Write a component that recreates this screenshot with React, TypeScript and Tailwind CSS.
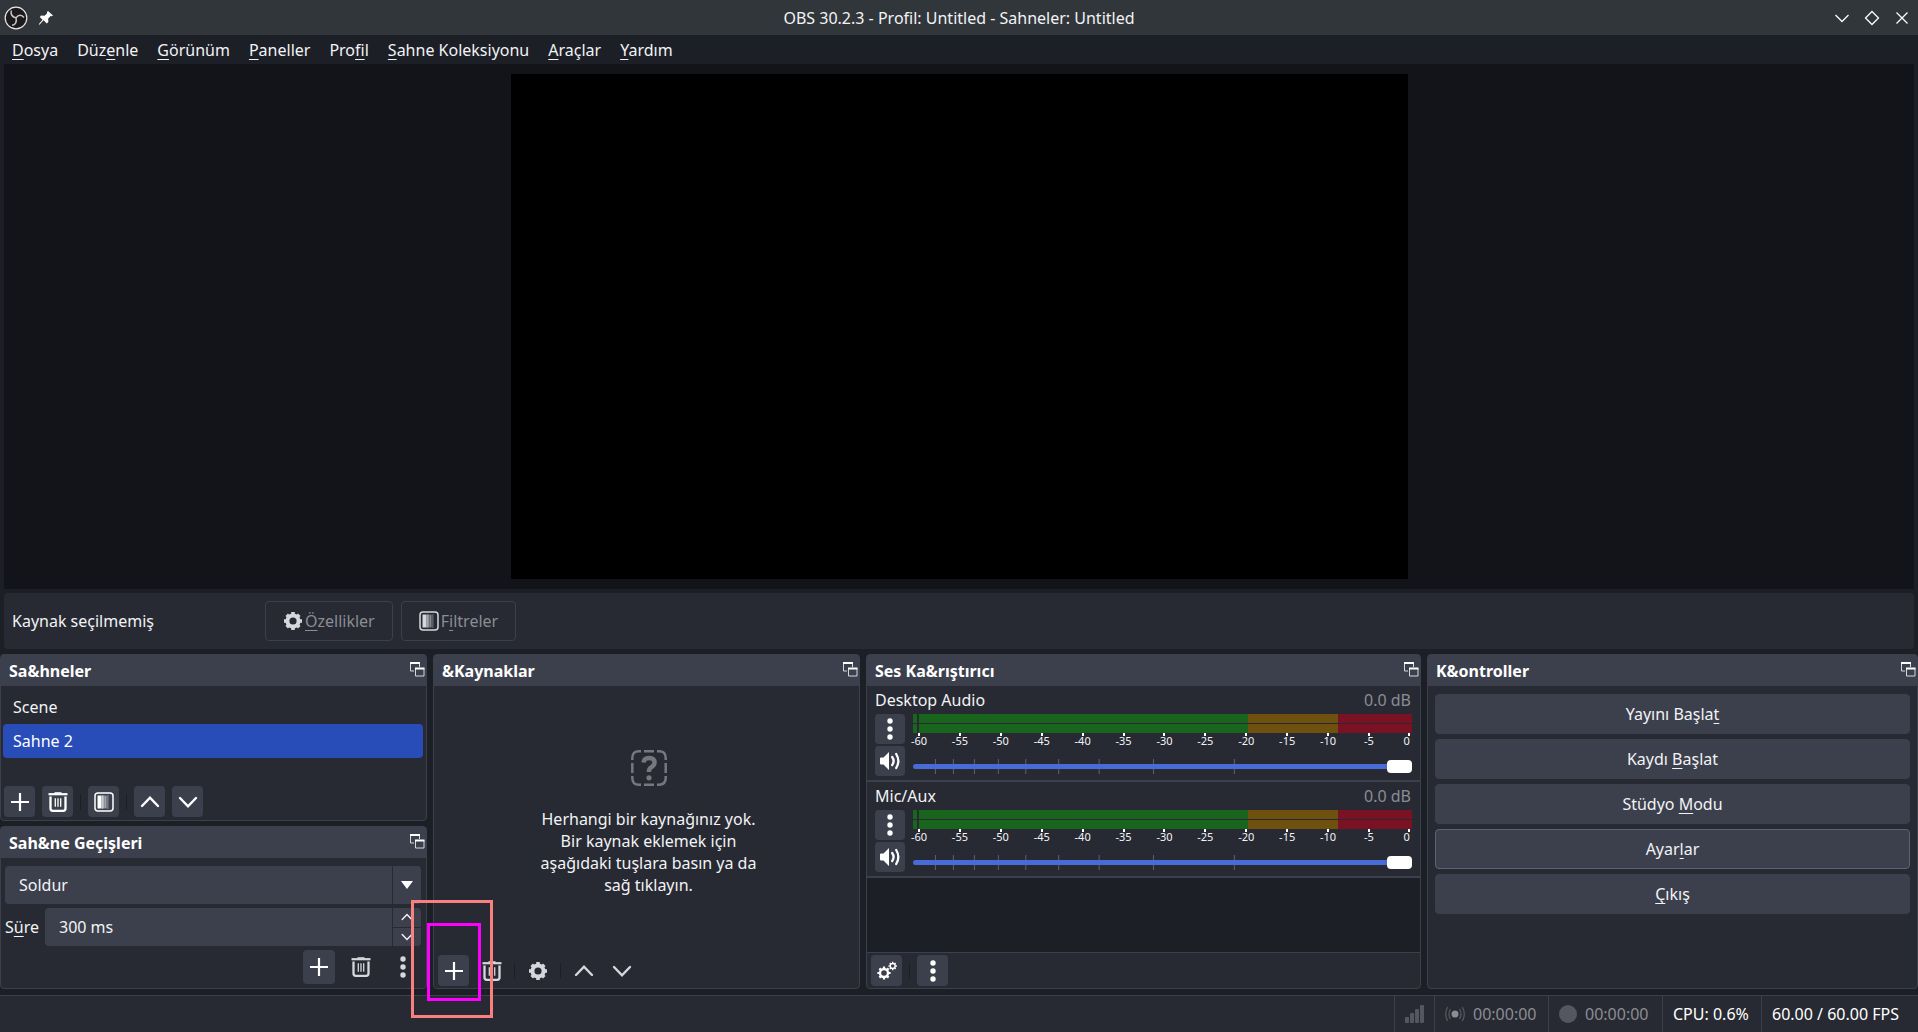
import React, { useState } from 'react';
import clsx from 'clsx';

const MENUS = ['_Dosya', 'Düz_enle', '_Görünüm', '_Paneller', 'Pro_fil', '_Sahne Koleksiyonu', '_Araçlar', '_Yardım'];
const SCENES = ['Scene', 'Sahne 2'];
const CONTROLS = ['Yayını Başla_t', 'Kaydı _Başlat', 'Stüdyo _Modu', 'Ayar_lar', '_Çıkış'];
const CHANNELS = ['Desktop Audio', 'Mic/Aux'];
const DB_MARKS = [-60, -55, -50, -45, -40, -35, -30, -25, -20, -15, -10, -5, 0];
const FADER_MARKS = ['4.5%', '8.1%', '12.3%', '17.1%', '22.6%', '29.2%', '37.3%', '48.2%', '64.4%'];

interface IconProps {
  className?: string;
}

// "_" in front of a letter marks the keyboard accelerator
function Accel({ text }: { text: string }) {
  const at = text.indexOf('_');
  if (at < 0) return <>{text}</>;
  return (
    <span>
      {text.slice(0, at)}
      <span className="underline decoration-1 underline-offset-3 [text-decoration-skip-ink:none]">{text[at + 1]}</span>
      {text.slice(at + 2)}
    </span>
  );
}

function PlusIcon({ className = 'size-5' }: IconProps) {
  return (
    <svg viewBox="0 0 20 20" className={className} fill="none" stroke="currentColor" strokeWidth="2.2">
      <path d="M10 1v18M1 10h18" />
    </svg>
  );
}

function TrashIcon({ className = 'size-5' }: IconProps) {
  return (
    <svg viewBox="0 0 20 20" className={className} fill="none" stroke="currentColor">
      <path d="M.5 2.2h19" strokeWidth="2.2" />
      <path d="M6.5 1h7" strokeWidth="1.6" />
      <path d="M2.5 4.5v12q0 2.3 2.3 2.3h10.4q2.3 0 2.3-2.3v-12" strokeWidth="2.3" />
      <path d="M7.3 6.3v8.4M10 6.3v8.4M12.7 6.3v8.4" strokeWidth="1.3" />
    </svg>
  );
}

function ChevronUpIcon({ className = 'size-5' }: IconProps) {
  return (
    <svg viewBox="0 0 20 20" className={className} fill="none" stroke="currentColor" strokeWidth="2.4" strokeLinecap="round">
      <path d="M2 14l8-8.3 8 8.3" />
    </svg>
  );
}

function ChevronDownIcon({ className = 'size-5' }: IconProps) {
  return (
    <svg viewBox="0 0 20 20" className={className} fill="none" stroke="currentColor" strokeWidth="2.4" strokeLinecap="round">
      <path d="M2 6l8 8.3L18 6" />
    </svg>
  );
}

function GearIcon({ className = 'size-5' }: IconProps) {
  return (
    <svg viewBox="0 0 20 20" className={className} fill="none" stroke="currentColor">
      <circle cx="10" cy="10" r="5.6" strokeWidth="4" />
      <path
        d="M10 1v3M10 16v3M1 10h3M16 10h3M3.7 3.7l2 2M14.3 14.3l2 2M3.7 16.3l2-2M14.3 5.7l2-2"
        strokeWidth="3.6"
        strokeLinejoin="round"
      />
    </svg>
  );
}

function GearsIcon() {
  return (
    <svg viewBox="0 0 20 20" className="size-5" fill="none" stroke="currentColor">
      <circle cx="7" cy="12" r="4" strokeWidth="2.4" />
      <path
        d="M7 5.4v2M7 16.6v2M.4 12h2M11.6 12h2M2.4 7.4l1.4 1.4M10.2 15.2l1.4 1.4M2.4 16.6l1.4-1.4M10.2 8.8l1.4-1.4"
        strokeWidth="2.2"
      />
      <circle cx="15.7" cy="5" r="2.5" strokeWidth="1.4" />
      <path
        d="M15.7.8v1.4M15.7 7.8v1.4M11.5 5h1.4M18.5 5h1.4M12.8 2.1l.9.9M17.7 7l.9.9M12.8 7.9l.9-.9M17.7 3l.9-.9"
        strokeWidth="1.4"
      />
    </svg>
  );
}

function FilterIcon({ className = 'size-5' }: IconProps) {
  return (
    <svg viewBox="0 0 20 20" className={className}>
      <rect x="1" y="1" width="18" height="18" rx="3" fill="none" stroke="currentColor" strokeWidth="1.5" />
      <path d="M3.5 3.5h4v13h-4z" fill="currentColor" />
      <path d="M7.5 3.5h3v13h-3z" fill="currentColor" opacity=".6" />
      <path d="M10.5 3.5h3v13h-3z" fill="currentColor" opacity=".3" />
      <path d="M8.5 3.5v13M11.5 4.5v12M14 3.5v13" stroke="currentColor" strokeWidth="1" strokeDasharray="1 1" opacity=".7" />
    </svg>
  );
}

function DotsIcon() {
  return (
    <svg viewBox="0 0 8 22" className="h-[22px] w-2" fill="currentColor">
      <circle cx="4" cy="3" r="2.7" />
      <circle cx="4" cy="11" r="2.7" />
      <circle cx="4" cy="19" r="2.7" />
    </svg>
  );
}

function SpeakerIcon() {
  return (
    <svg viewBox="0 0 20 20" className="size-5" fill="none" stroke="currentColor" strokeWidth="2.3" strokeLinecap="round">
      <path d="M0 7.5Q0 6.5 1 6.5H3.5L9 1v18L3.5 13.5H1Q0 13.5 0 12.5z" fill="currentColor" stroke="none" />
      <path d="M12.200 6q2.800 4 0 8M16.200 3q4.300 7 0 14" />
    </svg>
  );
}

function PopoutIcon() {
  return (
    <svg viewBox="0 0 16 16" className="size-4" fill="none" stroke="#d5d7dd">
      <path d="M5 10H1.5V2.5H10.5V6" />
      <path d="M1 2h10" stroke="#fff" strokeWidth="2" />
      <path d="M6.5 7.5h8.5v7.5h-8.5z" />
      <path d="M6 7.5h9.500" stroke="#fff" strokeWidth="2" />
    </svg>
  );
}

function ObsLogo() {
  return (
    <svg viewBox="0 0 24 24" className="size-6" fill="none" stroke="#c4c4c4">
      <circle cx="12" cy="12" r="10.8" fill="#1d1a1e" stroke="#e6e6e6" strokeWidth="1.2" />
      <path d="M7.200 4.500c-.6 4 1 6.500 4.800 7.300" strokeWidth="1.500" />
      <path d="M20 11.500c-2.200-3.200-5.600-3.200-8 .3" strokeWidth="1.500" />
      <path d="M8 19.300c3.600-.4 5-3.600 4-7.500" strokeWidth="1.500" />
    </svg>
  );
}

function PinIcon() {
  return (
    <svg viewBox="0 0 16 16" className="size-4" fill="#fcfcfc">
      <path d="M10 1l5 4.600-1.200.6-1.200-.2-2.500 2.800.3 3.200-1.600 1.500-3.300-3.300L1.500 14.800l-.8-.6 3.800-4.500L1.800 7 3 5.600l3.400.2L9 3.400 9 2z" />
    </svg>
  );
}

function ToolButton({ label, children, flat }: { label: string; children: React.ReactNode; flat?: boolean }) {
  return (
    <button
      type="button"
      title={label}
      aria-label={label}
      className={clsx(
        'flex h-[31px] w-[31px] shrink-0 items-center justify-center rounded',
        flat ? 'text-[#d5d7dd]' : 'bg-[#3c404d] text-white'
      )}
    >
      {children}
    </button>
  );
}

function Separator() {
  return <span className="h-4 w-px bg-[#1d1f26]" />;
}

function Panel({ title, className, children }: { title: string; className?: string; children: React.ReactNode }) {
  return (
    <section className={clsx('flex min-w-0 flex-col rounded border border-[#3c404d] bg-[#272a33]', className)}>
      <header className="flex h-[31px] shrink-0 items-start justify-between bg-[#3c404d] pr-px pl-2">
        <h2 className="leading-8 font-bold text-white">{title}</h2>
        <button type="button" aria-label={`${title} ayır`} className="mt-1.5">
          <PopoutIcon />
        </button>
      </header>
      {children}
    </section>
  );
}

function ScenesPanel() {
  const [selected, setSelected] = useState('Sahne 2');
  return (
    <Panel title="Sa&hneler" className="flex-1">
      <ul className="flex-1 py-1 pr-[3px] pl-0.5">
        {SCENES.map((scene) => (
          <li key={scene}>
            <button
              type="button"
              onClick={() => setSelected(scene)}
              className={clsx('h-[34px] w-full rounded px-2.5 text-left', selected === scene && 'bg-[#284cb8] text-white')}
            >
              {scene}
            </button>
          </li>
        ))}
      </ul>
      <div className="flex items-center gap-[7px] px-[3px] pb-[3px]">
        <ToolButton label="Sahne ekle"><PlusIcon /></ToolButton>
        <ToolButton label="Sahneyi sil"><TrashIcon /></ToolButton>
        <Separator />
        <ToolButton label="Sahne filtreleri"><FilterIcon /></ToolButton>
        <Separator />
        <ToolButton label="Yukarı taşı"><ChevronUpIcon /></ToolButton>
        <ToolButton label="Aşağı taşı"><ChevronDownIcon /></ToolButton>
      </div>
    </Panel>
  );
}

function TransitionsPanel() {
  return (
    <Panel title="Sah&ne Geçişleri">
      <div className="flex flex-col gap-1 pt-2 pr-[5px] pb-1 pl-1">
        <div className="relative">
          <select aria-label="Geçiş" className="h-[38px] w-full appearance-none rounded bg-[#3c404d] px-3.5">
            <option>Soldur</option>
          </select>
          <span className="pointer-events-none absolute inset-y-0 right-0 flex w-[29px] items-center justify-center border-l border-[#272a33]">
            <svg viewBox="0 0 12 8" className="h-2 w-3" fill="#fff"><path d="M0 0h12L6 8z" /></svg>
          </span>
        </div>
        <div className="flex items-center">
          <label htmlFor="duration" className="w-10 shrink-0"><Accel text="S_üre" /></label>
          <div className="flex h-[38px] min-w-0 flex-1 rounded bg-[#3c404d]">
            <input id="duration" type="text" defaultValue="300 ms" className="min-w-0 flex-1 bg-transparent px-3.5 outline-none" />
            <div className="flex w-[29px] flex-col border-l border-[#272a33]">
              <button type="button" aria-label="Artır" className="flex flex-1 items-center justify-center border-b border-[#272a33]">
                <ChevronUpIcon className="size-3" />
              </button>
              <button type="button" aria-label="Azalt" className="flex flex-1 items-center justify-center">
                <ChevronDownIcon className="size-3" />
              </button>
            </div>
          </div>
        </div>
        <div className="flex h-[34px] justify-end gap-2.5 pr-0.5">
          <button type="button" aria-label="Geçiş ekle" className="flex w-8 items-center justify-center rounded bg-[#3c404d] text-white"><PlusIcon /></button>
          <button type="button" aria-label="Geçişi sil" className="flex w-8 items-center justify-center text-[#d5d7dd]"><TrashIcon /></button>
          <button type="button" aria-label="Geçiş özellikleri" className="flex w-8 items-center justify-center text-[#d5d7dd]"><DotsIcon /></button>
        </div>
      </div>
    </Panel>
  );
}

function SourcesPanel() {
  return (
    <Panel title="&Kaynaklar">
      <div className="flex flex-1 flex-col items-center justify-center gap-[22px] pt-1 pl-1 text-center">
        <svg viewBox="0 0 36 36" className="size-9" fill="none" stroke="#76787f" strokeWidth="2.5">
          <path d="M1.300 10V8q0-6.700 6.700-6.700h2M26 1.300h2q6.700 0 6.700 6.700v2M34.700 26v2q0 6.700-6.700 6.700h-2M10 34.700H8q-6.700 0-6.700-6.700v-2M13 1.300h10M13 34.700h10M1.300 13v10M34.700 13v10" />
          <path d="M12.500 12.500q.5-4.500 5.500-4.500 5.500 0 5.500 4.500 0 2.500-2.700 4.300-2.800 1.700-2.800 4.200v1" strokeWidth="4.500" />
          <circle cx="18" cy="27.800" r="2.600" fill="#76787f" stroke="none" />
        </svg>
        <p className="w-[230px] leading-[22px]">
          Herhangi bir kaynağınız yok. Bir kaynak eklemek için aşağıdaki tuşlara basın ya da sağ tıklayın.
        </p>
      </div>
      <div className="flex items-center gap-[7px] px-1 pb-0.5">
        <div className="relative">
          <ToolButton label="Kaynak ekle"><PlusIcon /></ToolButton>
          {/* callout frames around the add button */}
          <span className="pointer-events-none absolute -top-8 -left-[11px] z-20 h-[78px] w-[54px] border-3 border-[#ff00ff]" />
          <span className="pointer-events-none absolute -top-[55px] -left-[27px] z-10 h-[118px] w-[82px] border-3 border-[#fa8080]" />
        </div>
        <ToolButton flat label="Kaynağı sil"><TrashIcon /></ToolButton>
        <Separator />
        <ToolButton flat label="Kaynak özellikleri"><GearIcon /></ToolButton>
        <Separator />
        <ToolButton flat label="Yukarı taşı"><ChevronUpIcon /></ToolButton>
        <ToolButton flat label="Aşağı taşı"><ChevronDownIcon /></ToolButton>
      </div>
    </Panel>
  );
}

function MeterBar() {
  return (
    <div className="grid h-[9px] grid-cols-[4fr_2fr_329fr_90fr_74fr]">
      <span className="bg-[#19651e]" />
      <span />
      <span className="bg-[#19651e]" />
      <span className="bg-[#6f510f]" />
      <span className="bg-[#7b1223]" />
    </div>
  );
}

function MixerChannel({ name }: { name: string }) {
  return (
    <div className="h-24 border-b-2 border-[#3c404d] px-2">
      <div className="flex h-7 items-center justify-between">
        <span>{name}</span>
        <span className="pr-px text-[#8b8d93]">0.0 dB</span>
      </div>
      <div className="flex gap-2">
        <div className="flex flex-col gap-0.5">
          <button type="button" aria-label={`${name} seçenekleri`} className="flex size-[30px] items-center justify-center rounded bg-[#3c404d] text-white"><DotsIcon /></button>
          <button type="button" aria-label={`${name} sessiz`} className="flex size-[30px] items-center justify-center rounded bg-[#3c404d] text-white"><SpeakerIcon /></button>
        </div>
        <div className="min-w-0 flex-1">
          <div className="flex flex-col gap-px">
            <MeterBar />
            <MeterBar />
          </div>
          <div className="mr-0.5 ml-1.5 flex h-[26px] justify-between text-[11px] leading-[10px]">
            {DB_MARKS.map((db) => (
              <div key={db} className="flex w-0 flex-col items-center last:items-end">
                <span className="h-[3px] w-0.5 shrink-0 bg-white" />
                <span className="whitespace-nowrap">{db}</span>
              </div>
            ))}
          </div>
          <div className="relative h-[15px]">
            <svg className="absolute inset-0 h-full w-full" stroke="#5b6273">
              {FADER_MARKS.map((x) => (
                <line key={x} x1={x} x2={x} y1="0" y2="15" />
              ))}
            </svg>
            <input
              type="range"
              aria-label={`${name} ses düzeyi`}
              min={0}
              max={100}
              defaultValue={100}
              className="relative block h-[15px] w-full appearance-none bg-transparent [&::-webkit-slider-runnable-track]:h-[5px] [&::-webkit-slider-runnable-track]:rounded-sm [&::-webkit-slider-runnable-track]:bg-[#476bd7] [&::-webkit-slider-thumb]:-mt-1 [&::-webkit-slider-thumb]:h-[13px] [&::-webkit-slider-thumb]:w-[25px] [&::-webkit-slider-thumb]:appearance-none [&::-webkit-slider-thumb]:rounded [&::-webkit-slider-thumb]:bg-white"
            />
          </div>
        </div>
      </div>
    </div>
  );
}

function MixerPanel() {
  return (
    <Panel title="Ses Ka&rıştırıcı">
      {CHANNELS.map((name) => (
        <MixerChannel key={name} name={name} />
      ))}
      <div className="min-h-[74px] flex-1 bg-[#1d1f26]" />
      <div className="flex h-9 items-center gap-[7px] border-t border-[#3c404d] px-1">
        <ToolButton label="Gelişmiş ses özellikleri"><GearsIcon /></ToolButton>
        <Separator />
        <ToolButton label="Karıştırıcı menüsü"><DotsIcon /></ToolButton>
      </div>
    </Panel>
  );
}

function ControlsPanel() {
  return (
    <Panel title="K&ontroller">
      <div className="flex flex-col gap-[5px] px-[7px] py-2">
        {CONTROLS.map((text) => (
          <button
            key={text}
            type="button"
            className={clsx(
              'h-10 rounded border bg-[#3c404d]',
              text === 'Ayar_lar' ? 'border-[#5b6273]' : 'border-[#3c404d]'
            )}
          >
            <Accel text={text} />
          </button>
        ))}
      </div>
    </Panel>
  );
}

function StatusBar() {
  return (
    <footer className="mt-1.5 flex h-[37px] shrink-0 justify-end border-t border-[#3c404d] bg-[#272a33] text-[#8b8d93] *:flex *:items-center *:border-l *:border-[#3c404d]">
      <div className="w-10 justify-center">
        <svg viewBox="0 0 20 20" className="size-5" fill="#54575f">
          <rect x="0" y="13" width="4" height="6" rx="1" />
          <rect x="5" y="9" width="4" height="10" rx="1" />
          <rect x="10" y="5" width="4" height="14" rx="1" />
          <rect x="15" y="1" width="4" height="18" rx="1" />
        </svg>
      </div>
      <div className="w-[114px] gap-2 pl-2.5">
        <svg viewBox="0 0 20 20" className="size-5" fill="none" stroke="#54575f" strokeWidth="1.3">
          <circle cx="10" cy="10" r="3.5" fill="#8b8d93" stroke="none" />
          <path d="M5.500 5q-3 5 0 10M14.500 5q3 5 0 10M2.700 3q-4 7 0 14M17.300 3q4 7 0 14" />
        </svg>
        <span>00:00:00</span>
      </div>
      <div className="w-[114px] gap-2 pl-2.5">
        <span className="size-[18px] rounded-full bg-[#54575f]" />
        <span>00:00:00</span>
      </div>
      <div className="w-[99px] pl-2.5 text-white">CPU: 0.6%</div>
      <div className="w-[157px] pl-2.5 text-white">60.00 / 60.00 FPS</div>
    </footer>
  );
}

export default function App() {
  return (
    <div className="flex h-screen min-h-[760px] flex-col bg-[#1d1f26] font-['Noto_Sans',sans-serif] text-[16px] leading-[22px] text-[#f2f3f5]">
      {/* Window title bar */}
      <div className="grid h-[35px] shrink-0 grid-cols-[1fr_auto_1fr] items-center bg-[#31363b]">
        <div className="flex items-center gap-2.5 pl-1">
          <ObsLogo />
          <PinIcon />
        </div>
        <h1>OBS 30.2.3 - Profil: Untitled - Sahneler: Untitled</h1>
        <div className="flex justify-end gap-3.5 pr-2 *:size-4">
          <button type="button" aria-label="Küçült">
            <svg viewBox="0 0 16 16" className="size-4" fill="none" stroke="#fcfcfc" strokeWidth="1.3"><path d="M1.500 5L8 11.500 14.500 5" /></svg>
          </button>
          <button type="button" aria-label="Büyüt">
            <svg viewBox="0 0 16 16" className="size-4" fill="none" stroke="#fcfcfc" strokeWidth="1.3"><path d="M8 1.500L14.500 8 8 14.500 1.500 8z" /></svg>
          </button>
          <button type="button" aria-label="Kapat">
            <svg viewBox="0 0 16 16" className="size-4" fill="none" stroke="#fcfcfc" strokeWidth="1.3"><path d="M2.500 2.500l11 11M13.500 2.500l-11 11" /></svg>
          </button>
        </div>
      </div>

      <nav className="flex h-[29px] shrink-0 items-center gap-[19px] px-3">
        {MENUS.map((menu) => (
          <button key={menu} type="button"><Accel text={menu} /></button>
        ))}
      </nav>

      {/* Program preview */}
      <main className="mx-1 flex min-h-0 flex-1 justify-center bg-[#131419] py-2.5">
        <div className="aspect-[897/505] h-full bg-black" />
      </main>

      <div className="mx-1 mt-1 mb-[5px] flex h-14 shrink-0 items-center gap-2 rounded bg-[#272a33] px-2">
        <span className="w-[245px]">Kaynak seçilmemiş</span>
        <button type="button" disabled className="flex h-10 items-center gap-0.5 rounded border border-[#3c404d] px-[17px] text-[#8b8d93]">
          <GearIcon className="size-5 text-[#d5d7dd]" />
          <Accel text="_Özellikler" />
        </button>
        <button type="button" disabled className="flex h-10 items-center gap-0.5 rounded border border-[#3c404d] px-[17px] text-[#8b8d93]">
          <FilterIcon className="size-5 text-[#d5d7dd]" />
          <Accel text="F_iltreler" />
        </button>
      </div>

      {/* Docks */}
      <div className="grid shrink-0 grid-cols-[427fr_427fr_555fr_491fr] gap-1.5">
        <div className="flex min-w-0 flex-col gap-[5px]">
          <ScenesPanel />
          <TransitionsPanel />
        </div>
        <SourcesPanel />
        <MixerPanel />
        <ControlsPanel />
      </div>

      <StatusBar />
    </div>
  );
}
